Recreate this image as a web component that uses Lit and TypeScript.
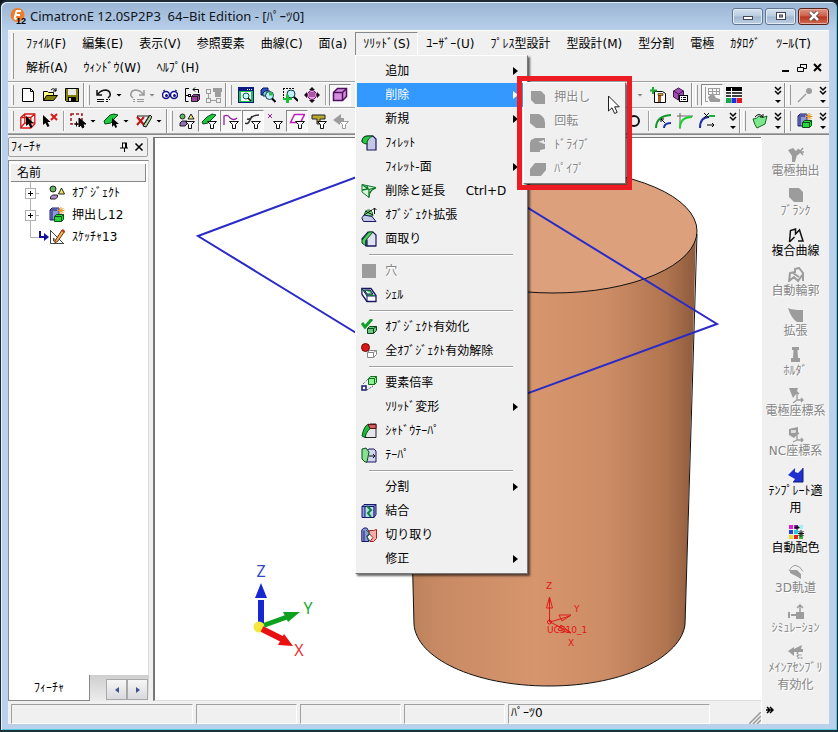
import { LitElement, html, svg, css, nothing } from "lit";
import { customElement } from "lit/decorators.js";
import { classMap } from "lit/directives/class-map.js";

const D = "#9c9c9c";
const funnel = svg`<path d="M6.500 8.500h9l-3 3v4h-3v-4z" fill="#fff" stroke="#111"/>`;

/* 16 x 16 glyphs */
const glyphs: Record<string, unknown> = {
  new: svg`<path d="M2.500 1.500h8l3 3v10h-11z" fill="#fff" stroke="#000"/><path d="M10.500 1.500v3h3" fill="none" stroke="#000"/>`,
  open: svg`<path d="M1.500 13.500v-9h4l1 1h5v3" fill="#ffff8a" stroke="#000"/><path d="M1.500 13.500l3-5h11l-4 5z" fill="#80800a" stroke="#000"/><path d="M9 3q3-3 5 1m0-3v3h-3" fill="none" stroke="#000"/>`,
  save: svg`<path d="M1.500 1.500h13v13h-12l-1-1z" fill="#80800a" stroke="#000"/><rect x="4" y="2" width="8" height="6" fill="#e8e8e8"/><rect x="4" y="10" width="8" height="5" fill="#000"/><rect x="5" y="11" width="2" height="3" fill="#ddd"/>`,
  undo: svg`<path d="M1 3v5h5M2 7q3-4 8-4q5 1 4 6l-2 2" fill="none" stroke="#111" stroke-width="1.500"/><path d="M1 12.500h7m2 0h2m1 0h1M1 14.500h7m2 0h2" stroke="#111"/>`,
  redo: svg`<path d="M15 3v5h-5M14 7q-3-4-8-4q-5 1-4 6l2 2" fill="none" stroke="#999" stroke-width="1.500"/><path d="M15 12.500h-7m-2 0h-2M15 14.500h-7m-2 0h-2" stroke="#999"/>`,
  eyes: svg`<circle cx="4" cy="8" r="3.500" fill="#fff" stroke="#12128a" stroke-width="1.500"/><circle cx="12" cy="8" r="3.500" fill="#fff" stroke="#12128a" stroke-width="1.500"/><circle cx="4.500" cy="8.500" r="1.500" fill="#12128a"/><circle cx="12.500" cy="8.500" r="1.500" fill="#12128a"/><path d="M1 4l2-1m10 0l2 1" stroke="#12128a"/>`,
  swap: svg`<path d="M5 1.500h-3.500v13h3M1.500 8.500h3M9 2.500h5.500V6M11 .5l-2 2 2 2" fill="none" stroke="#000"/><rect x="4.500" y="7.500" width="2" height="2" fill="#fff" stroke="#000"/><path d="M7.500 9.500l2-2h6v5l-2 2h-6z" fill="#a23ca2" stroke="#222"/><path d="M7.500 9.500h6v5m0-5l2-2" fill="none" stroke="#222"/>`,
  treeoff: svg`<path d="M7 1h9v4h-1v5H9V5H7z" fill="${D}"/><rect x=".5" y="2.500" width="4" height="4" fill="none" stroke="${D}"/><rect x=".5" y="11.500" width="4" height="4" fill="none" stroke="${D}"/><rect x="10.500" y="11.500" width="4" height="4" fill="none" stroke="${D}"/><path d="M2.500 6v5M5 13.500h5" fill="none" stroke="${D}"/>`,
  zoomall: svg`<rect x=".5" y=".5" width="15" height="15" fill="#22c048" stroke="#0a1b80"/><rect x="1" y="1" width="14" height="3" fill="#0a1b80"/><path d="M9 2.500h1m1 0h1m1 0h1" stroke="#fff"/><rect x="3" y="5" width="10" height="9" fill="#fff"/><circle cx="8" cy="9" r="3" fill="#c8f6ff" stroke="#0a5b50"/><path d="M10 11l3 3" stroke="#000" stroke-width="1.500"/>`,
  zoomobj: svg`<path d="M1 3l2-2h5v5l-2 2H1z" fill="#2a50c8" stroke="#0a1b60"/><path d="M3 6l2-2h5v5H3z" fill="#7fd8d0" stroke="#0a1b60"/><circle cx="9.500" cy="8.500" r="4" fill="#bff0ff" stroke="#0a3b50"/><path d="M9 4.500v4h4a4 4 0 0 0-4-4z" fill="#30b848"/><path d="M12 11.500l3.500 3.500" stroke="#000" stroke-width="2"/>`,
  zoomwin: svg`<path d="M1 1.500h12M1.500 1v10" stroke="#000" stroke-dasharray="2 1" fill="none"/><circle cx="9" cy="7" r="4" fill="#bff0ff" stroke="#0a3b30"/><path d="M12 10l4 4" stroke="#000" stroke-width="2"/><path d="M4 8h3v3h3v2H7v3H4v-3H1v-2h3z" fill="#18c038"/>`,
  pan: svg`<path d="M8 0l3 3H5zM8 16l3-3H5zM0 8l3-3v6zM16 8l-3-3v6z" fill="#111"/><circle cx="8" cy="8" r="4.500" fill="#f0a0e8" stroke="#601060"/><path d="M6 5v5m2-5v5m2-5v5" stroke="#601060"/>`,
  cube: svg`<path d="M1.500 5.500l4-4h9v8l-4 4h-9z" fill="#d68fe0" stroke="#501060" stroke-width="1.500"/><path d="M1.500 5.500h9v8m0-8l4-4" fill="none" stroke="#501060" stroke-width="1.500"/>`,
  addpart: svg`<path d="M4.500 4.500h8l3 2v9h-11z" fill="#fff" stroke="#000"/><path d="M8 7h3v8H8z" fill="#a85a20"/><path d="M8 6.500h5v2H8z" fill="#d8a030" stroke="#000" stroke-width=".5"/><path d="M3 0v7M0 3.500h7" stroke="#20a830" stroke-width="2"/>`,
  violet: svg`<path d="M1.500 4l5-3 5 3v6l-5 3-5-3z" fill="#a050b0" stroke="#401050"/><path d="M1.500 4l5 3 5-3M6.500 7v6" fill="none" stroke="#401050"/><rect x="7.500" y="8.500" width="8" height="6" fill="#fff" stroke="#000"/><path d="M9 10.500h1m1 0h3M9 12.500h1m1 0h3" stroke="#000"/>`,
  boardoff: svg`<rect x="4.500" y="1.500" width="11" height="6" fill="none" stroke="${D}"/><path d="M5 4.500h10M8.500 2v5m4-5v5M1.500 0v14M1 14.500h3" stroke="${D}"/><path d="M4 10l5-4 3 5 4 1v3H6z" fill="${D}"/>`,
  palette: svg`<rect width="16" height="16" fill="#fff"/><rect y="0" width="16" height="4" fill="#000"/><path d="M0 6h16M0 9h16" stroke="#000" stroke-width="1.500"/><rect x="5" y="1" width="1" height="9" fill="#fff"/><rect y="11" width="5" height="5" fill="#18a848"/><rect x="5.500" y="11" width="5" height="5" fill="#1830e0"/><rect x="11" y="11" width="5" height="5" fill="#e81818"/>`,
  pin: svg`<path d="M1 15l8-8" stroke="${D}" stroke-width="1.500"/><circle cx="12" cy="4" r="3" fill="${D}"/>`,
  redcube: svg`<path d="M.8 4.500l4-3.500h10v10l-4 4h-10zM.8 4.500h10v10.500M10.800 4.500l4-3.500M4.800 1v9l-4 4.500m4-4.500h10" fill="none" stroke="#d81818" stroke-width="1.300"/><path d="M6 3v10l2.500-2 2 4 2-1-2-4h3z" fill="#000"/>`,
  unpick: svg`<path d="M1 2v10l2.500-2 2 4 2-1-2-4h3z" fill="#000"/><path d="M9 1l6 6m0-6l-6 6" stroke="#d81818" stroke-width="2"/>`,
  box: svg`<rect x="1" y="1" width="11" height="10" fill="none" stroke="#a01818" stroke-width="1.500" stroke-dasharray="3 2"/><path d="M9 5v9l2-2 1.500 3 1.500-1-1-3h3zM4 11h5M6.500 8.500v5" fill="#000" stroke="#000"/>`,
  green: svg`<path d="M1 8l6-6 4-1 4 1-4 4-3 4-6 1z" fill="#20c840" stroke="#084818"/><path d="M9 5v9l2-2 1.500 3 1.500-1-1-3h3z" fill="#000"/>`,
  brush: svg`<path d="M1 3h12l-5 8z" fill="none" stroke="#222"/><path d="M1 4l7 8m0-8l-7 8" stroke="#c01818" stroke-width="2"/><path d="M7 13L14 2l2 2-6 10z" fill="#a8d8a0" stroke="#111"/>`,
  objfilter: svg`<circle cx="3.500" cy="3.500" r="2.500" fill="#60b860" stroke="#222"/><path d="M12 1l3 5H9z" fill="#e8e070" stroke="#222"/><path d="M1 10l2-2h5v3l-2 2H1z" fill="#9070b8" stroke="#222"/>${funnel}`,
  solidfilter: svg`<path d="M1 9l5-5 5-3 4 1-4 4-4 4-5 1z" fill="#20c840" stroke="#084818"/>${funnel}`,
  facefilter: svg`<path d="M1 12V3q4-2 6 2 4 3 7 0" fill="none" stroke="#9020a0" stroke-width="1.300"/>${funnel}`,
  curvefilter: svg`<path d="M0 10q3 2 5-3t9-5M2 6q4 1 5-3" fill="none" stroke="#333" stroke-width="1.500"/>${funnel}`,
  pointfilter: svg`<path d="M1 1l4 4m0-4l-4 4" stroke="#9020a0"/>${funnel}`,
  planefilter: svg`<path d="M1.500 9.500l4-8h10l-4 8z" fill="#fff" stroke="#c020b8" stroke-width="1.500"/>${funnel}`,
  ucsfilter: svg`<path d="M1 2h13v4H9v5H6V6H1z" fill="#b8a830" stroke="#222"/>${funnel}`,
  grayfilter: svg`<path d="M8 1v4h3v4h-4v3L0 7z" fill="${D}"/><path d="M6.500 8.500h9l-3 3v4h-3v-4z" fill="#fff" stroke="${D}"/>`,
  ring: svg`<circle cx="7" cy="8" r="5" fill="none" stroke="#111" stroke-width="2"/>`,
  arc1: svg`<path d="M1 15q0-12 15-13" fill="none" stroke="#109828" stroke-width="2"/><path d="M9 15q0-5 7-5" fill="none" stroke="#2030a8" stroke-width="2"/><path d="M10 10L6 6m0 3V6h3" stroke="#000" fill="none"/>`,
  arc2: svg`<path d="M0 3h16M3 0v16" stroke="#666"/><path d="M3 15q0-11 12-11" fill="none" stroke="#18d030" stroke-width="2"/>`,
  arc3: svg`<path d="M1 15q0-11 9-11" fill="none" stroke="#2030a8" stroke-width="2"/><path d="M10 3h6" stroke="#18b030" stroke-width="2"/><path d="M5 0l5 5m0-5L5 5M8 12h7m-2-2l2 2-2 2" stroke="#000" fill="none"/>`,
  sweep: svg`<path d="M1 6q4 0 6-3 4 3 8 0l-2 8q-4 2-8 4-2-2-4-9z" fill="#7de890" stroke="#106820"/><path d="M3 4q4-5 8 0m0-3v3H8" fill="none" stroke="#111"/>`,
  extrude: svg`<path d="M1 3l2-2h7v9l-2 3H1z" fill="#8f97d8" stroke="#18186a"/><path d="M3 4v9m-2-10h7" fill="none" stroke="#18186a"/><path d="M12 0v7m-3.500-3.500h7M9.500 1l5 5m0-5l-5 5" stroke="#e89818"/><path d="M5.500 9.500l2-2h7v5l-2 2h-7z" fill="#28d838" stroke="#085018"/><path d="M5.500 9.500h7v5m0-5l2-2" fill="none" stroke="#085018"/>`,
  objects: svg`<circle cx="4" cy="4" r="3" fill="#60b860" stroke="#222"/><path d="M12.500 3l3 6h-6z" fill="#f0e860" stroke="#222"/><path d="M1.500 12l2-2h5v2l-2 2h-5z" fill="#b090d0" stroke="#222"/>`,
  sketch: svg`<path d="M1.500 1.500v13h13z" fill="none" stroke="#444"/><path d="M1 1l14 14M4.500 9v3h3z" stroke="#444" fill="none"/><path d="M6 12L13 1l2.500 1.500L9 12l-3 2z" fill="#f0b850" stroke="#703010"/><path d="M12.500 2l3 2 .5-2-2-2z" fill="#c83020"/>`,
  fillet: svg`<path d="M1 6q1-5 6-5h5l3 3v11H6V9z" fill="#c4c8e4" stroke="#18185e" stroke-width="1.200"/><path d="M1 7q0-6 6-6h5Q6 3 6 9 3 9 1 7z" fill="#28c840" stroke="#085018"/>`,
  delext: svg`<path d="M1 1.500l14 3q-6 1-7 10L1 9z" fill="#d8f8dc" stroke="#107828"/><path d="M1 1.500l7 5 7-2M8 6.500v8M1 7l6-1-1-3M9 10q1-3 6-5" fill="none" stroke="#107828" stroke-width="1.300"/>`,
  objext: svg`<path d="M3 9q1-7 6-6 3 2 3 6z" fill="#80e088" stroke="#107828"/><path d="M3 8L.8 11l1.700 3.500H15l-4-5z" fill="#c4c8e4" stroke="#18185e"/><path d="M4 4l8 4M3 8l8-5M13.500 7V1m-2 2l2-2 2 2" fill="none" stroke="#111"/>`,
  chamfer: svg`<path d="M1 8l6-7h5l3 3v11H6V9z" fill="#dfe1f0" stroke="#18185e" stroke-width="1.200"/><path d="M1 9l7-8h4L5 9v6L1 12z" fill="#50d060" stroke="#085018"/><path d="M5 9.500v5.500h10" fill="none" stroke="#18185e" stroke-width="1.200"/>`,
  block: svg`<path d="M1 1h14v14H1z" fill="${D}"/>`,
  shell: svg`<path d="M.8 1.500h9.200l5 7v6H6l-5-7z" fill="#fff" stroke="#18185e" stroke-width="1.300"/><path d="M1 1.500l5 7.500h9M6 9v6M3.500 3h5.500l3 4H6z" fill="#28d040" stroke="#18185e"/>`,
  check: svg`<path d="M6.500 9.500l2-2h7v4l-3 3h-6z" fill="#70c888" stroke="#084818"/><path d="M6.500 9.500h6v5m0-5l3-2" fill="none" stroke="#084818"/><path d="M1 4l3 4 7-8" fill="none" stroke="#10a028" stroke-width="3"/>`,
  stop: svg`<path d="M6.500 9.500l2-2h7v4l-3 3h-6z" fill="#fff" stroke="#888"/><path d="M6.500 9.500h6v5m0-5l3-2" fill="none" stroke="#888"/><circle cx="4.500" cy="4.500" r="4" fill="#d81818" stroke="#700808"/>`,
  scale: svg`<path d="M7.500 3.500l2-2h6v6l-2 2h-6z" fill="#90f098" stroke="#107018"/><path d="M7.500 3.500h6v6m0-6l2-2" fill="none" stroke="#107018"/><path d="M1 11h4v4H1z" fill="#fff" stroke="#18186a" stroke-width="1.500"/><path d="M2 9l5-5M6 15l6-4" stroke="#444" stroke-dasharray="1 1"/>`,
  shadow: svg`<path d="M4 14.500Q5 5 9 1h6v13.500z" fill="#e4e4ea" stroke="#222"/><path d="M1 13Q3 2 8 1l4 3q-6 2-8 10.500z" fill="#20b838" stroke="#085018"/><path d="M7 1.500h8v4H9z" fill="#c86068" stroke="#601010"/>`,
  taper: svg`<path d="M5 4l3-2h5l2 2v11H5z" fill="#d0d4ec" stroke="#18186a"/><path d="M1 2l4-1 3 4-2 10-2 0-3-3z" fill="#88e090" stroke="#085018"/><path d="M8 9h6m-2-2l2 2-2 2" stroke="#111" fill="none"/>`,
  combine: svg`<path d="M1 3.500l2-2h12v10l-2 3H1z" fill="#8f9bd8" stroke="#18186a"/><path d="M4 4h8v10H4z" fill="#b8dcec"/><path d="M1 3.500h12v11m0-11l2-2M4 3.500v11" fill="none" stroke="#18186a"/><path d="M6 3l4 4-3 3 3 4" fill="none" stroke="#0c8038" stroke-width="2"/>`,
  trim: svg`<path d="M.8 3l2-2h3l3 5-3 3 2 5.500H.8z" fill="#8f9bd8" stroke="#18186a"/><path d="M3 3.500v11" stroke="#18186a"/><path d="M8.500 3.500h4l3-1v9l-3 3H9l3-4-4-4z" fill="#f4b0a8" stroke="#a82020"/><path d="M5 3l4 4-3 3 3 4" fill="none" stroke="#0c8038"/>`,
  g1: svg`<path d="M1 2h10l4 4v9H5l-4-4z" fill="${D}"/>`,
  g2: svg`<path d="M0 1h9q6 3 6 9v5H6l-6-5z" fill="${D}"/>`,
  g3: svg`<path d="M1 3l4-2h10v4l-4 1 4 1v5l-5 1v2H0V6z" fill="${D}"/><path d="M8 5l6-2v3z" fill="#f0f0f0"/>`,
  g4: svg`<path d="M5 2h11v7l-5 6H0V8z" fill="${D}"/>`,
  eextract: svg`<path d="M0 3l5-2 3 3 2-2 2 4-3 2-2 7H4V9z" fill="${D}"/><path d="M10 2l5 6m0-7l-6 7m0-3h7" stroke="${D}" stroke-width="1.500"/>`,
  blank: svg`<path d="M1 1h10l4 4v10H6l-5-5z" fill="${D}"/>`,
  composite: svg`<path d="M1.500 15L2.500 3.500l5-1.500v5l4-4 3.500 11h-5M1.500 15l5-5" fill="none" stroke="#111" stroke-width="1.500"/>`,
  contour: svg`<path d="M1 15l1-9 5-1V2l4-1 4 5v8M1 14l5-4 4 4 5-7M5 6l6 4" fill="none" stroke="${D}" stroke-width="2"/>`,
  extend: svg`<path d="M0 1q4 2 15 2v12H9Q3 11 0 1z" fill="${D}"/>`,
  holder: svg`<path d="M4 0h7v3H9.500l.5 8h2v4H3v-4h2l.5-8H4z" fill="${D}"/>`,
  eucs: svg`<path d="M1 1h9L8 7 5 11z" fill="${D}"/><path d="M9 5v8h6m-2-2l2 2-2 2M7 7l2-2 2 2M9 13l-4 3" fill="none" stroke="${D}" stroke-width="1.300"/>`,
  ncucs: svg`<path d="M1 2l9-2v7l-4 4-5-3z" fill="${D}"/><path d="M3 3h5v3H3z" fill="#ddd"/><path d="M9 5v8h6m-2-2l2 2-2 2M7 7l2-2 2 2M9 13l-4 2" fill="none" stroke="${D}" stroke-width="1.300"/>`,
  template: svg`<path d="M0 8l7-7v4l3 1 5-5v14H5l2-3z" fill="#2030d0"/><path d="M5 15h10V1" fill="none" stroke="#101878"/>`,
  colors: svg`<rect x="1" y="1" width="4" height="4" fill="#e020d0"/><rect x="6" y="1" width="4" height="4" fill="#a820c8"/><rect x="11" y="1" width="4" height="4" fill="#a0f0f0"/><rect x="1" y="6" width="4" height="4" fill="#2040e0"/><rect x="6" y="6" width="4" height="4" fill="#30c8e0"/><rect x="1" y="11" width="4" height="4" fill="#f0d820"/><rect x="6" y="11" width="4" height="4" fill="#e82020"/><rect x="11" y="11" width="4" height="4" fill="#38b838"/><path d="M9 1v5M6.500 3.500h5M7.500 2l3 3m0-3l-3 3M13 6v7m-3-3.500h6M10.500 7l5 5m0-5l-5 5" stroke="#111"/>`,
  path3d: svg`<path d="M1 7Q4 1 8 1.500t7 6" fill="none" stroke="${D}"/><path d="M2 6h7l4 4v5L8 12 2 9z" fill="${D}"/>`,
  simulate: svg`<path d="M0 8h2v6H0zM3 10h5v2H3zM8 8h8v7H8z" fill="${D}"/><path d="M12 9V1m-3 3l3-3 3 3" fill="none" stroke="${D}" stroke-width="1.500"/>`,
  assembly: svg`<path d="M0 7l6-4v2l8-4-1 4h2v3H6v4z" fill="${D}"/><path d="M9.500 8v6h5M9.500 11h4" fill="none" stroke="${D}" stroke-dasharray="2 1" stroke-width="1.500"/>`,
};

const icon = (name: string) =>
  html`<svg class="ico" viewBox="0 0 16 16" aria-hidden="true">${glyphs[name]}</svg>`;

interface Item { label: string; icon?: string; key?: string; more?: boolean; off?: boolean; open?: boolean }
const sep = null;

const solidMenu: (Item | null)[] = [
  { label: "追加", more: true },
  { label: "削除", more: true, open: true },
  { label: "新規", more: true },
  { label: "ﾌｨﾚｯﾄ", icon: "fillet" },
  { label: "ﾌｨﾚｯﾄ-面", more: true },
  { label: "削除と延長", icon: "delext", key: "Ctrl+D" },
  { label: "ｵﾌﾞｼﾞｪｸﾄ拡張", icon: "objext" },
  { label: "面取り", icon: "chamfer" },
  sep,
  { label: "穴", icon: "block", off: true },
  { label: "ｼｪﾙ", icon: "shell" },
  sep,
  { label: "ｵﾌﾞｼﾞｪｸﾄ有効化", icon: "check" },
  { label: "全ｵﾌﾞｼﾞｪｸﾄ有効解除", icon: "stop" },
  sep,
  { label: "要素倍率", icon: "scale" },
  { label: "ｿﾘｯﾄﾞ変形", more: true },
  { label: "ｼｬﾄﾞｳﾃｰﾊﾟ", icon: "shadow" },
  { label: "ﾃｰﾊﾟ", icon: "taper" },
  sep,
  { label: "分割", more: true },
  { label: "結合", icon: "combine" },
  { label: "切り取り", icon: "trim" },
  { label: "修正", more: true },
];

const deleteMenu: Item[] = [
  { label: "押出し", icon: "g1", off: true },
  { label: "回転", icon: "g2", off: true },
  { label: "ﾄﾞﾗｲﾌﾞ", icon: "g3", off: true },
  { label: "ﾊﾟｲﾌﾟ", icon: "g4", off: true },
];

@customElement("app-menu")
export class AppMenu extends LitElement {
  static styles = css`
    :host { display: block; }
    .menu {
      box-sizing: border-box; padding: 3px 2px 2px 1px; background: #f0f0f0; color: #000;
      border: 1px solid #fff; border-right-color: #777; border-bottom-color: #777;
      box-shadow: 2px 2px 2px rgba(0, 0, 0, 0.6);
      min-width: 173px;
    }
    .row { position: relative; }
    button {
      display: flex; align-items: center; width: 100%; height: 24px; padding: 0 7px 0 4px;
      border: 0; background: none; font: inherit; color: inherit; text-align: left; white-space: nowrap;
    }
    .ico { width: 16px; height: 16px; display: block; }
    .slot { width: 24px; height: 16px; flex: none; }
    .key { margin-left: auto; margin-right: 12px; }
    .more { margin-left: auto; border: 4px solid transparent; border-left: 5px solid #000; border-right: 0; }
    .off { color: #858585; text-shadow: 1px 1px #fff; }
    .open { background: #3399ff; color: #fff; }
    .open .more { border-left-color: #fff; }
    hr { margin: 3px 12px 3px 12px; border: 0; border-top: 1px solid #a0a0a0; border-bottom: 1px solid #fff; }
    .sub { position: absolute; left: 166px; top: -1px; z-index: 2; }
    .sub .menu { min-width: 103px; padding: 2px; }
    .mark { position: absolute; inset: -6px; border: 5px solid #ed1c24; pointer-events: none; }
    .cursor { position: absolute; left: 84px; top: 13px; width: 14px; height: 20px; }
  `;

  private row(it: Item): unknown {
    return html`<div class="row">
      <button role="menuitem" class=${classMap({ off: !!it.off, open: !!it.open })} ?disabled=${it.off}>
        <span class="slot">${it.icon ? icon(it.icon) : nothing}</span>
        <span>${it.label}</span>
        ${it.key ? html`<span class="key">${it.key}</span>` : nothing}
        ${it.more ? html`<span class="more"></span>` : nothing}
      </button>
      ${it.open
        ? html`<div class="sub">
            <div class="menu" role="menu">${deleteMenu.map((s) => this.row(s))}</div>
            <div class="mark"></div>
            <svg class="cursor" viewBox="0 0 14 20"><path d="M1.500 1v15l3.500-3.200 2.600 5.700 2.600-1.200-2.600-5.500h4.700z" fill="#fff" stroke="#222" /></svg>
          </div>`
        : nothing}
    </div>`;
  }

  render() {
    return html`<div class="menu" role="menu">${solidMenu.map((it) => (it ? this.row(it) : html`<hr />`))}</div>`;
  }
}

@customElement("app-scene")
export class AppScene extends LitElement {
  static styles = css`
    :host { display: block; overflow: hidden; background: #fff; }
    svg { display: block; width: 100%; height: 100%; font-family: "DejaVu Sans", sans-serif; }
    .edge { fill: none; stroke: #111; stroke-width: 1; }
    .plane { fill: none; stroke: #2a2ac8; stroke-width: 2; }
    .ucs { fill: none; stroke: #e01818; }
    .small { font-size: 9px; fill: #e01818; }
    .axis { font-family: "Noto Sans", sans-serif; font-size: 16px; text-anchor: middle; stroke-width: 0; }
    .z { fill: #3347c4; } .y { fill: #22aa33; } .x { fill: #e83030; }
  `;
  render() {
    return html`<svg viewBox="155 138 606 562" preserveAspectRatio="xMinYMin slice" role="img" aria-label="パーツ">
      <defs>
        <linearGradient id="side" x1="0" x2="1">
          <stop offset="0" stop-color="#b98059" /><stop offset=".12" stop-color="#c88a64" />
          <stop offset=".45" stop-color="#d6956d" /><stop offset=".7" stop-color="#cc8c65" />
          <stop offset=".9" stop-color="#b0744f" /><stop offset="1" stop-color="#8d5b3d" />
        </linearGradient>
      </defs>
      <path d="M404 231L414 624C416 658 474 686 549 686C626 686 682 656 685 624L696 234Z" fill="url(#side)" />
      <ellipse cx="553" cy="231" rx="144" ry="62" fill="#dda07c" />
      <path class="edge" d="M404 231L414 624C416 658 474 686 549 686C626 686 682 656 685 624L697 234" />
      <ellipse class="edge" cx="553" cy="231" rx="144" ry="62" />
      <path class="plane" d="M198 236L432 149L717 324L482 410Z" />
      <g class="ucs">
        <path d="M549.500 622v-24m-3 10l3-11 3 11zM550 622l20-6m-11-1l12 0-9 6zM550 622l20 10m-12-2l13 3-10-8z" />
        <circle cx="549.500" cy="622" r="2" />
      </g>
      <text class="small" x="546" y="589">Z</text><text class="small" x="574" y="612">Y</text>
      <text class="small" x="547" y="633">UCS10_1</text><text class="small" x="568" y="646">X</text>
      <path d="M261 625V600" stroke="#1828d0" stroke-width="6" /><path d="M261 583l6 15h-12z" fill="#1828d0" />
      <path d="M262 626l25-9" stroke="#10a020" stroke-width="5" /><path d="M300 612l-17 0 5 10z" fill="#10a020" />
      <circle cx="259" cy="627" r="5.500" fill="#f4e840" />
      <path d="M262 629l20 10" stroke="#e81010" stroke-width="6" /><path d="M293 646l-15-1 6-11z" fill="#e81010" />
      <text class="axis z" x="261" y="577">Z</text><text class="axis y" x="308" y="614">Y</text><text class="axis x" x="299" y="656">X</text>
    </svg>`;
  }
}

const sideTools: [string, string, boolean][] = [
  ["eextract", "電極抽出", true], ["blank", "ﾌﾞﾗﾝｸ", true], ["composite", "複合曲線", false],
  ["contour", "自動輪郭", true], ["extend", "拡張", true], ["holder", "ﾎﾙﾀﾞ", true],
  ["eucs", "電極座標系", true], ["ncucs", "NC座標系", true], ["template", "ﾃﾝﾌﾟﾚｰﾄ適用", false],
  ["colors", "自動配色", false], ["path3d", "3D軌道", true], ["simulate", "ｼﾐｭﾚｰｼｮﾝ", true],
  ["assembly", "ﾒｲﾝｱｾﾝﾌﾞﾘ有効化", true],
];

const tool = (name: string, down = false) =>
  html`<button class=${classMap({ tool: true, down })} aria-label=${name}>${icon(name)}</button>`;
const tools = (...names: string[]) => names.map((n) => tool(n));
const drop = (off = false) => html`<span class=${classMap({ drop: true, off })}></span>`;
const grip = html`<span class="grip"></span>`;
const bar = html`<span class="bar"></span>`;
const rule = html`<span class="rule"></span>`;
const over = html`<button class="over" aria-label="more"><svg viewBox="0 0 8 18"><path d="M1 1l3 3 3-3M1 5l3 3 3-3" fill="none" stroke="#000" stroke-width="1.500"/><path d="M1 14h6l-3 3z"/></svg></button>`;

@customElement("app-root")
export class AppRoot extends LitElement {
  static styles = css`
    :host {
      display: block; min-height: 100vh; background: #10161d; color: #000;
      font: 12px/16px "DejaVu Sans", "Noto Sans CJK JP", sans-serif;
    }
    * { box-sizing: border-box; }
    button { font: inherit; color: inherit; padding: 0; border: 0; background: none; }
    .ico { width: 16px; height: 16px; display: block; flex: none; }
    .window {
      display: flex; flex-direction: column; min-height: 100vh; padding: 0 8px 6px 7px;
      border: 1px solid #1d2a35; border-top-width: 2px; border-bottom: 2px solid #17343f;
      border-radius: 7px 7px 0 0; background: #b9d1ea;
      background: linear-gradient(#9ab4d4, #b9d1ea 30px);
      box-shadow: inset 1px 1px #e6f0fa, inset -1px -1px #55c8dc;
    }
    .title { display: flex; align-items: center; height: 28px; padding-left: 2px; }
    .logo { width: 17px; height: 18px; flex: none; }
    h1 { flex: 1; margin: 0 0 0 3px; font: 13px/18px "Noto Sans", "Noto Sans CJK JP", sans-serif; white-space: pre; color: #10141c; }
    .caps { display: flex; gap: 2px; }
    .cap {
      display: grid; place-items: center; width: 31px; height: 17px; border: 1px solid #5f7590; border-radius: 3px;
      background: linear-gradient(#d3e0ee, #b9cce0 48%, #9fb7d0 52%, #bdd0e4); box-shadow: inset 0 0 0 1px #e4edf6;
    }
    .cap svg { width: 14px; height: 10px; }
    .close { background: linear-gradient(#dc9484, #cf5d48 48%, #b8341f 52%, #d06a50); border-color: #5a2018; box-shadow: inset 0 0 0 1px #e8b0a4; }
    .client { flex: 1; display: flex; flex-direction: column; background: #f0f0f0; border-top: 1px solid #fff; }

    .menubar { display: flex; padding: 1px 0 2px 3px; height: 51px; border-bottom: 1px solid #a0a0a0; }
    .menubar .grip { height: 46px; margin: 1px 4px 0 0; }
    .rows { flex: 1; min-width: 0; }
    .line { display: flex; height: 24px; }
    .entry { position: relative; }
    .entry > button { height: 24px; padding: 0 8px; white-space: nowrap; }
    .entry.active > button { border: 1px solid #888; border-right-color: #fff; border-bottom-color: #f0f0f0; padding: 0 7px; }
    .popup { position: absolute; left: 0; top: 23px; z-index: 5; }
    .mdi { margin-left: auto; display: flex; align-items: center; gap: 6px; padding-right: 6px; }
    .mdi svg { width: 10px; height: 10px; display: block; }

    .toolbar { display: flex; align-items: center; height: 26px; border-top: 1px solid #fff; border-bottom: 1px solid #a8a8a8; padding-left: 3px; overflow: hidden; }
    .toolbar > * { flex: none; }
    .toolbar .fill { flex: 1; }
    .tool { display: grid; place-items: center; width: 22px; height: 22px; }
    .down { border: 1px solid #888; border-right-color: #fff; border-bottom-color: #fff; background: #f8f8f8; }
    .grip { width: 3px; height: 20px; border-left: 1px solid #fff; border-right: 1px solid #999; margin-right: 3px; }
    .bar { width: 2px; height: 26px; border-left: 1px solid #909090; border-right: 1px solid #fff; margin-right: 2px; }
    .rule { width: 2px; height: 20px; border-left: 1px solid #a0a0a0; border-right: 1px solid #fff; margin: 0 2px; }
    .drop { width: 11px; height: 3px; background: #000; clip-path: polygon(1px 0, 7px 0, 4px 3px); }
    .drop.off { background: #888; }
    .over { width: 13px; height: 20px; }
    .over svg { width: 8px; height: 18px; display: block; margin: 1px 3px; }
    .space { width: 26px; }
    .gap { width: 8px; }

    .main { flex: 1; display: flex; min-height: 0; border-top: 1px solid #888; }
    .work { flex: 1; min-width: 0; display: flex; flex-direction: column; padding-top: 2px; }
    .docs { flex: 1; display: flex; min-height: 0; }
    .panel { display: flex; flex-direction: column; width: 141px; flex: none; }
    .phead { display: flex; align-items: center; height: 20px; margin: 0 1px 3px 0; padding: 0 3px 0 2px; border: 1px solid #a0a0a0; border-radius: 2px; }
    .phead h2 { flex: 1; margin: 0; font: inherit; }
    .phead svg { width: 10px; height: 10px; display: block; margin-left: 5px; }
    .tree { flex: 1; background: #fff; border: 1px solid #888; border-right-color: #ddd; border-bottom: 0; padding: 3px 2px; }
    .thead { height: 18px; padding-left: 6px; background: #f0f0f0; border-right: 1px solid #888; border-bottom: 1px solid #888; line-height: 18px; }
    ul { list-style: none; margin: 0; padding: 0; }
    li { display: flex; align-items: center; height: 22px; padding-left: 13px; white-space: nowrap; }
    .branch { width: 25px; height: 22px; flex: none; }
    .tree .ico { margin-right: 7px; }
    .tabs { display: flex; height: 26px; background: linear-gradient(#cfcfcf, #ececec); }
    .tab { width: 82px; background: #fff; border: 1px solid #888; border-top: 0; }
    .scroll { margin: 4px 1px 1px auto; display: flex; }
    .scroll button { display: grid; place-items: center; width: 21px; height: 21px; background: linear-gradient(#f6f6f6, #dadade); border: 1px solid #a8a8a8; }
    .scroll svg { width: 4px; height: 6px; fill: #405090; }
    app-scene { flex: 1; min-width: 0; margin-left: 4px; border-left: 2px solid #777; border-top: 1px solid #777; border-bottom: 1px solid #ddd; }
    .side { display: flex; flex-direction: column; width: 68px; flex: none; padding-top: 12px; border-left: 1px solid #fff; }
    .side button { display: flex; flex-direction: column; align-items: center; line-height: 17px; padding: 0 3px 7px; overflow-wrap: anywhere; }
    .side .off { color: #858585; text-shadow: 1px 1px #fff; }
    .more { margin: 5px 0 0 4px; width: 8px; height: 8px; display: block; }

    .status { display: flex; align-items: center; gap: 3px; height: 23px; padding: 2px 0 0 3px; }
    .cell { width: 101px; height: 20px; flex: none; border: 1px solid #a0a0a0; border-right-color: #fff; border-bottom-color: #fff; padding-left: 2px; line-height: 17px; }
    .wide { width: 182px; }
    .grow { flex: 1; }
    .size { width: 12px; height: 12px; margin-left: 36px; align-self: end; flex: none; }
  `;

  private entries(list: string[]) {
    return list.map((t) =>
      t.startsWith("ｿﾘｯﾄﾞ")
        ? html`<div class="entry active"><button aria-haspopup="menu" aria-expanded="true">${t}</button><app-menu class="popup"></app-menu></div>`
        : html`<div class="entry"><button>${t}</button></div>`,
    );
  }

  render() {
    const branch = (last: boolean) => html`<svg class="branch" viewBox="0 0 25 22">
      ${last
        ? svg`<path d="M6.500 0v11.500h8" fill="none" stroke="#b0b0b0"/><path d="M16 5v6h5" fill="none" stroke="#10109a" stroke-width="2"/><path d="M20 7l5 4-5 4z" fill="#10109a"/>`
        : svg`<path d="M6.500 0v22M12 11.500h3" stroke="#b0b0b0"/><rect x="1.500" y="6.500" width="10" height="10" fill="#fff" stroke="#b0b0b0"/><path d="M4 11.500h5M6.500 9v5" stroke="#000"/>`}
    </svg>`;
    return html`<div class="window">
      <header class="title">
        <svg class="logo" viewBox="0 0 17 18">
          <circle cx="7.500" cy="8" r="7" fill="#ee7c2b" />
          <path d="M6 4h5M5 8h5M4.500 12h4M6.500 4L4.500 12" stroke="#fff" stroke-width="2" fill="none" />
          <text x="6" y="17" font-size="9" font-weight="bold" font-family="Liberation Sans, sans-serif" fill="#000">12</text>
        </svg>
        <h1>CimatronE 12.0SP2P3  64–Bit Edition - [ﾊﾟｰﾂ0]</h1>
        <div class="caps">
          <button class="cap" aria-label="最小化"><svg viewBox="0 0 14 10"><rect x="2.500" y="5.500" width="9" height="3" fill="#fff" stroke="#445" /></svg></button>
          <button class="cap" aria-label="最大化"><svg viewBox="0 0 14 10"><rect x="2.500" y="1.500" width="9" height="7" fill="#fff" stroke="#445" /><rect x="5.500" y="4" width="3" height="2" fill="#9ab" stroke="#445" /></svg></button>
          <button class="cap close" aria-label="閉じる"><svg viewBox="0 0 14 10"><path d="M3 1l8 8m0-8l-8 8" stroke="#444" stroke-width="4" /><path d="M3 1l8 8m0-8l-8 8" stroke="#fff" stroke-width="2.500" /></svg></button>
        </div>
      </header>
      <div class="client">
        <nav class="menubar">
          ${grip}
          <div class="rows">
            <div class="line">
              ${this.entries(["ﾌｧｲﾙ(F)", "編集(E)", "表示(V)", "参照要素", "曲線(C)", "面(a)", "ｿﾘｯﾄﾞ(S)", "ﾕｰｻﾞｰ(U)", "ﾌﾟﾚｽ型設計", "型設計(M)", "型分割", "電極", "ｶﾀﾛｸﾞ", "ﾂｰﾙ(T)"])}
            </div>
            <div class="line">
              ${this.entries(["解析(A)", "ｳｨﾝﾄﾞｳ(W)", "ﾍﾙﾌﾟ(H)"])}
              <div class="mdi">
                <button aria-label="最小化"><svg viewBox="0 0 10 10"><path d="M1 8h7" stroke="#000" stroke-width="2" /></svg></button>
                <button aria-label="元に戻す"><svg viewBox="0 0 10 10"><path d="M3.500 4V1.500h6v4H7M3 1.500h7M.5 4.500h6v4h-6z" fill="none" stroke="#000" /></svg></button>
                <button aria-label="閉じる"><svg viewBox="0 0 10 10"><path d="M1 1l7 7m0-7l-7 7" stroke="#000" stroke-width="2" /></svg></button>
              </div>
            </div>
          </div>
        </nav>
        <div class="toolbar" role="toolbar">
          ${grip}${tools("new", "open", "save")}${bar}${grip}${tool("undo")}${drop()}${tool("redo")}${drop(true)}${tools("eyes", "swap", "treeoff")}${bar}${grip}${tools("zoomall", "zoomobj", "zoomwin", "pan")}${rule}${tool("cube", true)}
          <span class="fill"></span>
          ${drop(true)}${tools("addpart", "violet")}${bar}${grip}${tool("boardoff", true)}${tool("palette")}<span class="space"></span>${over}${bar}${grip}${tool("pin")}${over}
        </div>
        <div class="toolbar" role="toolbar">
          ${grip}${tools("redcube", "unpick")}${rule}${tool("box")}${drop()}${tool("green")}${drop()}${tool("brush")}${drop()}${bar}${grip}${tool("objfilter")}${tool("solidfilter", true)}${tool("facefilter", true)}${tool("curvefilter", true)}${tool("pointfilter")}${tool("planefilter", true)}${tools("ucsfilter", "grayfilter")}
          <span class="fill"></span>
          ${tool("ring")}${rule}${tools("arc1", "arc2", "arc3")}<span class="gap"></span>${over}${bar}${grip}${tool("sweep")}${over}${bar}${grip}${tool("extrude")}${over}
        </div>
        <div class="main">
          <div class="work">
            <div class="docs">
              <aside class="panel">
                <div class="phead">
                  <h2>ﾌｨｰﾁｬ</h2>
                  <button aria-label="固定"><svg viewBox="0 0 10 10"><path d="M3 1h5M3.500 1v5M1 6h8M5.500 6v4" stroke="#000" fill="none" /><path d="M7 1v5" stroke="#000" stroke-width="2" /></svg></button>
                  <button aria-label="閉じる"><svg viewBox="0 0 10 10"><path d="M1.500 1.500l7 7m0-7l-7 7" stroke="#000" stroke-width="1.500" /></svg></button>
                </div>
                <div class="tree">
                  <div class="thead">名前</div>
                  <ul role="tree">
                    <li role="treeitem">${branch(false)}${icon("objects")}ｵﾌﾞｼﾞｪｸﾄ</li>
                    <li role="treeitem">${branch(false)}${icon("extrude")}押出し12</li>
                    <li role="treeitem">${branch(true)}${icon("sketch")}ｽｹｯﾁｬ13</li>
                  </ul>
                </div>
                <div class="tabs">
                  <button class="tab">ﾌｨｰﾁｬ</button>
                  <div class="scroll">
                    <button aria-label="前"><svg viewBox="0 0 4 6"><path d="M4 0v6L0 3z" /></svg></button>
                    <button aria-label="次"><svg viewBox="0 0 4 6"><path d="M0 0v6l4-3z" /></svg></button>
                  </div>
                </div>
              </aside>
              <app-scene></app-scene>
            </div>
            <footer class="status">
              <span class="cell wide"></span><span class="cell"></span><span class="cell"></span><span class="cell"></span><span class="cell grow">ﾊﾟｰﾂ0</span>
              <svg class="size" viewBox="0 0 12 12"><path d="M0 12L12 0M4 12l8-8M8 12l4-4" stroke="#999" stroke-width="1.500" /></svg>
            </footer>
          </div>
          <aside class="side">
            ${sideTools.map(([i, label, off]) => html`<button class=${classMap({ off })} ?disabled=${off}>${icon(i)}<span>${label}</span></button>`)}
            <svg class="more" viewBox="0 0 8 8"><path d="M1 1l3 3-3 3M4 1l3 3-3 3M0 4h7" fill="none" stroke="#000" stroke-width="1.500" /></svg>
          </aside>
        </div>
      </div>
    </div>`;
  }
}
